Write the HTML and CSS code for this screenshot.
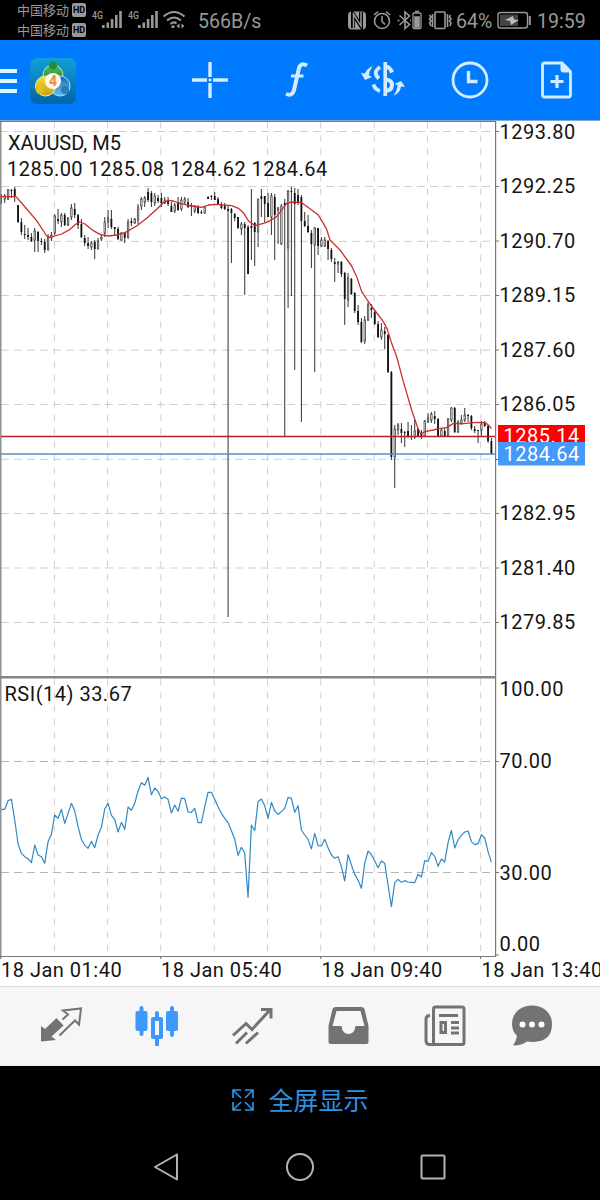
FILE: index.html
```html
<!DOCTYPE html>
<html lang="zh-CN">
<head>
<meta charset="utf-8">
<title>XAUUSD, M5</title>
<link rel="stylesheet" href="styles.css">
</head>
<body>
<div class="phone">
  <div class="status">
    <div class="carriers">
      <div class="carrier">中国移动<span class="hd">HD</span></div>
      <div class="carrier">中国移动<span class="hd">HD</span></div>
    </div>
    <svg class="radio" viewBox="90 0 98 40" fill="#999">
      <text x="92" y="19" class="gen" textLength="11" lengthAdjust="spacingAndGlyphs">4G</text>
      <path d="M102 25h2.600v3h-2.600zM106.500 22.500h2.600v5.500h-2.600zM110.800 19h2.600v9h-2.600zM115 15h2.600v13h-2.600zM119.200 11h2.600v17h-2.600z"/>
      <text x="128" y="19" class="gen" textLength="11" lengthAdjust="spacingAndGlyphs">4G</text>
      <path d="M138 25h2.600v3h-2.600zM142.500 22.500h2.600v5.500h-2.600zM146.800 19h2.600v9h-2.600zM151 15h2.600v13h-2.600zM155.200 11h2.600v17h-2.600z"/>
      <g fill="none" stroke="#999" stroke-width="2"><path d="M163.500 16.500q10.500-9 21 0M167 20.500q7-6 14 0M170.500 24q3.500-3 6 -.5"/></g>
      <path d="M171.500 25.500h3v2.500h-3zM176.500 26l3-2.500v5zM184.500 26l-3-2.500v5z"/>
    </svg>
    <span class="speed">566B/s</span>
    <svg class="sys" viewBox="346 0 108 40" fill="none" stroke="#999" stroke-width="1.600">
      <rect x="348" y="11.500" width="18" height="18" rx="4" fill="#999" stroke="none"/>
      <path d="M353 28V14l8 12V12" stroke="#000" stroke-width="4"/><path d="M353.500 28V14l7.500 12V12" stroke-width="1.500"/>
      <circle cx="382" cy="21" r="7.500"/><path d="M382 16v5.500l3 3M374 15l4-3.500M390 15l-4-3.500"/>
      <path d="M399.500 15.500l10 9-4.500 4V12l4.500 4-10 9M397.500 20.500h2M410 20.500h1"/>
      <rect x="413" y="13" width="8" height="15.500" rx="1" stroke-width="1.300"/><path d="M415 11.500h4"/><path d="M415 17h4v10h-4z" fill="#999"/>
      <rect x="435" y="12" width="10" height="16.500" rx="1"/><path d="M432.500 14v13M429.500 15l1.500 2-1.500 2 1.500 2-1.500 2 1.500 3M447.500 14v13M450.500 15l-1 2 1.500 2-1.500 2 1.500 2-1 3"/>
    </svg>
    <span class="pct">64%</span>
    <svg class="batt" viewBox="497 0 36 40" fill="none" stroke="#999"><rect x="498" y="12.500" width="29.500" height="15.500" rx="2.500" stroke-width="1.400"/><path d="M500 14.500h18v11.500h-18z" fill="#444" stroke="none"/><path d="M529.800 16v9" stroke-width="2"/><path d="M505 20l8-4 1 3.500 5 .5-8 5-1-4z" fill="#bbb" stroke="none"/></svg>
    <span class="time">19:59</span>
  </div>

  <header class="topbar">
    <svg class="menu" viewBox="0 0 18 28"><path d="M0 5h17M0 15h17M0 25h17" stroke="#e0f4ff" stroke-width="4"/></svg>
    <svg class="logo" viewBox="0 0 48 48">
      <defs>
        <linearGradient id="tile" x2="0" y2="1"><stop stop-color="#10a0d8"/><stop offset="1" stop-color="#0563ab"/></linearGradient>
        <linearGradient id="green" x2="0" y2="1"><stop stop-color="#55bd62"/><stop offset="1" stop-color="#16772c"/></linearGradient>
        <linearGradient id="gold" x2="0" y2="1"><stop stop-color="#f3df3b"/><stop offset="1" stop-color="#c99d0e"/></linearGradient>
        <linearGradient id="blue" x2="0" y2="1"><stop stop-color="#1c6cb0"/><stop offset="1" stop-color="#67bdf2"/></linearGradient>
      </defs>
      <rect x="1" y="1" width="46" height="46" rx="7" fill="url(#tile)"/>
      <circle cx="24" cy="18" r="10" fill="url(#green)" stroke="#b8e8ae"/>
      <circle cx="31" cy="29" r="10" fill="url(#blue)" stroke="#a9dcfb"/>
      <circle cx="16.500" cy="29" r="10" fill="url(#gold)" stroke="#f5ee96"/>
      <circle cx="24" cy="8.500" r="4" fill="#258b39"/><circle cx="11" cy="33" r="4" fill="#e1c01d"/><circle cx="36" cy="33" r="4" fill="#2b7dbf"/>
      <circle cx="24" cy="24" r="8" fill="#fffaf0"/>
      <text x="24" y="29" text-anchor="middle" class="four">4</text>
    </svg>
    <svg class="tools" viewBox="180 40 420 80" fill="none" stroke="#d4ecff" stroke-width="2.800">
      <path d="M210 62v15M210 83v15M192 80h15M213 80h15" stroke-width="3.400"/><path d="M208.700 78.700h2.600v2.600h-2.600z" fill="#d4ecff" stroke="none"/>
      <path d="M307 65.500Q301 62 299 68l-5 22q-1.500 6.500-8 4" stroke-width="4"/><path d="M291 76h12.500" stroke-width="3"/>
      <path d="M380 67q-8 5.500-1 11.500M373.500 84.500q1.500 5 6.500 6.500" stroke-width="3.800"/>
      <path d="M385.200 62v34" stroke-width="3.600"/><path d="M386 66.500q4 .5 6 6M386 79.500q6.500 1 6 6t-6.500 5.500" stroke-width="4"/>
      <path d="M361 73l4 7 7-3-3-1.500q0-5 4-9.500-6 2-8 7.500zM405 87l-4-6-6.500 3 3 1q0 5-4 10.500 6.500-2 7.500-9z" fill="#d4ecff" stroke="none"/>
      <circle cx="470" cy="80" r="17"/><path d="M468.500 71v10.500h9" stroke-width="3.400"/>
      <path d="M545 63H562l8.500 8.500V95q0 2-2 2h-24q-2 0-2-2V65q0-2 2.500-2z"/><path d="M560.500 62.500v7q0 3 3 3h7.500v-1l-8.500-8.500z" fill="#d4ecff" stroke="none"/><path d="M557 75v13M550.500 81.500h13" stroke-width="3.200"/>
    </svg>
  </header>

  <main class="chart">
    <svg viewBox="0 120 600 866" class="plot">
      <path class="edge" d="M0 120.500h600"/>
      <g id="grid" class="grid"></g>
      <g id="candles"></g>
      <path id="average" class="average"/>
      <path class="level ask" d="M1 436.500h495"/>
      <path class="level bid" d="M1 454h495"/>
      <path id="rsi" class="rsi"/>
      <path class="frame" d="M.8 121.500v835M0 121.500h496M495.600 121v836M0 956.500h496"/>
      <path class="divider" d="M0 677.300h496"/>
      <path class="frame" d="M496 131.500h3M496 186.500h3M496 241h3M496 295.500h3M496 350h3M496 404.500h3M496 459.500h3M496 513.500h3M496 568h3M496 622.500h3M496 761.500h3M496 872.500h3M496 955h3M.8 956v3M160.800 956v3M320.800 956v3M480.500 956v3"/>
      <g class="label">
        <text x="8" y="150" class="symbol">XAUUSD, M5</text>
        <text x="7" y="175.500" class="ohlc">1285.00 1285.08 1284.62 1284.64</text>
        <text x="4.500" y="701">RSI(14) 33.67</text>
        <text x="499.500" y="138.500">1293.80</text><text x="499.500" y="193.200">1292.25</text><text x="499.500" y="247.700">1290.70</text>
        <text x="499.500" y="302">1289.15</text><text x="499.500" y="356.500">1287.60</text><text x="499.500" y="411">1286.05</text>
        <text x="499.500" y="520">1282.95</text><text x="499.500" y="574.500">1281.40</text><text x="499.500" y="629">1279.85</text>
        <text x="499.500" y="696.300">100.00</text><text x="499.500" y="768">70.00</text><text x="499.500" y="879.500">30.00</text><text x="499.500" y="950.500">0.00</text>
        <text x="1" y="976.500">18 Jan 01:40</text><text x="161" y="976.500">18 Jan 05:40</text><text x="321.500" y="976.500">18 Jan 09:40</text><text x="481.500" y="976.500">18 Jan 13:40</text>
      </g>
      <path d="M498 425h87v20h-87z" fill="#f00"/><text x="503.500" y="443" class="label price">1285.14</text>
      <path d="M498 442h87v23.500h-87z" fill="#4499fb"/><text x="503.500" y="461" class="label price">1284.64</text>
    </svg>
  </main>

  <nav class="tabs">
    <svg viewBox="0 0 44 44"><path d="M2 39.500V24l4 3 11.500-11 7 7.500-12 11 4.500 3.500z" fill="#737373"/><path d="M20.500 33.500L36 18.500l4 4L42 6.500 24 8.500l5 4-5.500 5" fill="none" stroke="#737373" stroke-width="2"/></svg>
    <svg viewBox="0 0 44 44" fill="#3f98fc"><path d="M.5 11q0-2 2-2h2V6q0-2 2-2t2 2v3h2q2 0 2 2v16q0 2-2 2h-2v3q0 2-2 2t-2-2v-3h-2q-2 0-2-2zM31 11q0-2 2-2h2V6q0-2 2-2t2 2v3h2q2 0 2 2v16q0 2-2 2h-2v4q0 2-2 2t-2-2v-4h-2q-2 0-2-2z"/><path fill-rule="evenodd" d="M16 17q0-2 2-2h2v-4q0-2 2-2t2 2v4h2q2 0 2 2v18q0 2-2 2h-2v6q0 2-2 2t-2-2v-6h-2q-2 0-2-2zm4 2v14h4V19z"/></svg>
    <svg viewBox="0 0 44 44" fill="none" stroke="#737373" stroke-width="3"><path d="M2 33.500l13-12 6 6L38 9M30 7.500h10v9M5 41.500l11-11M15 41.500l12-11"/></svg>
    <svg viewBox="0 0 44 44"><path fill-rule="evenodd" fill="#737373" d="M8.500 5h26q2 0 3 2l4 17v16q0 2-2 2h-36q-2 0-2-2V24l4-17q1-2 3-2zm1 4l-4 15h9q1 8 7 8t7-8h9l-4-15z"/></svg>
    <svg viewBox="0 0 44 44" fill="none" stroke="#737373" stroke-width="3"><rect x="10.500" y="5" width="30.500" height="37.500" rx="2"/><path d="M7 13.500q-4 0-4 4v21q0 4 4 4h6M16 13.500h19M28 20.500h8M28 26h8M28 31h8"/><rect x="18" y="20.500" width="4.500" height="10"/></svg>
    <svg class="chat" viewBox="0 0 44 44"><path fill="#737373" d="M22 3.500C10 3.500 2 11.500 2 22q0 7 5 12-1 6-4 9.500 9 0 14-4 25 3 25-17.500C42 11.500 34 3.500 22 3.500z"/><g fill="#fff"><circle cx="12.500" cy="22.500" r="3"/><circle cx="22" cy="22.500" r="3"/><circle cx="31.500" cy="22.500" r="3"/></g></svg>
  </nav>

  <div class="fullscreen">
    <svg viewBox="0 0 24 24" fill="none" stroke="#2c92e0" stroke-width="1.700"><path d="M2 10V2h8M14 2h8v8M22 14v8h-8M10 22H2v-8M2 2l8 8M22 2l-8 8M22 22l-8-8M2 22l8-8"/></svg>
    <span>全屏显示</span>
  </div>
  <div class="system">
    <svg viewBox="0 0 30 30"><path d="M3 15L25 2.500v25z"/></svg>
    <svg viewBox="0 0 30 30"><circle cx="15" cy="15" r="13"/></svg>
    <svg viewBox="0 0 30 30"><rect x="3.500" y="3.500" width="23" height="23" rx="1"/></svg>
  </div>
</div>
<script src="chart.js"></script>
</body>
</html>
```
FILE: styles.css
```css
body { margin: 0; background: #000; font-family: Roboto, "Noto Sans CJK SC", sans-serif; }
.phone { width: 600px; height: 1200px; display: flex; flex-direction: column; overflow: hidden; }
svg { display: block; flex: none; }

.status { height: 40px; display: flex; align-items: center; color: #999; font-size: 20px; white-space: nowrap; }
.carriers { width: 73px; padding-left: 17px; display: flex; flex-direction: column; gap: 4px; }
.carrier { display: flex; align-items: center; gap: 3px; height: 16px; font-size: 13px; line-height: 16px; font-family: "Noto Sans CJK SC", sans-serif; }
.hd { width: 14px; height: 14px; border-radius: 2px; background: #999; color: #000; font: bold 9px/14px Roboto, sans-serif; text-align: center; }
.radio { width: 98px; height: 40px; }
.gen { font: 500 11px Roboto, sans-serif; }
.speed { width: 148px; margin-left: 10px; padding-top: 2px; font-size: 19.600px; }
.sys { width: 108px; height: 40px; }
.pct { width: 41px; margin-left: 2px; padding-top: 2px; font-size: 19.500px; }
.batt { width: 36px; height: 40px; }
.time { margin-left: 4px; padding-top: 2px; font-size: 19.600px; }

.topbar { height: 80px; display: flex; align-items: center; background: #007aff; }
.menu { width: 18px; height: 28px; }
.logo { width: 48px; height: 48px; margin-left: 11px; margin-top: 1px; }
.four { font: bold 14px Roboto, sans-serif; fill: #f08a35; }
.tools { width: 420px; height: 80px; margin-left: auto; }

.chart { height: 866px; background: #fff; }
.plot { width: 600px; height: 866px; }
.grid { fill: none; stroke: #cfcfcf; stroke-width: 1; }
.edge { stroke: #7fa9d4; }
.frame { fill: none; stroke: #777; stroke-width: 1.200; }
.divider { stroke: #858585; stroke-width: 2.600; }
.level { stroke-width: 1.300; }
.ask { stroke: #b5222b; }
.bid { stroke: #4b93cc; }
.average { fill: none; stroke: #c8302c; stroke-width: 1.300; stroke-linejoin: round; }
.rsi { fill: none; stroke: #3089c5; stroke-width: 1.200; stroke-linejoin: round; }
.wick { stroke: #333; stroke-width: 1; }
.body-down { fill: #111; }
.body-up { fill: #fff; stroke: #444; stroke-width: .8; }
.label { font: 20px Roboto, sans-serif; letter-spacing: .5px; fill: #141414; }
.symbol { letter-spacing: 0; }
.ohlc { letter-spacing: .48px; }
.price { fill: #fff; }

.tabs { height: 79px; border-top: 1px solid #dedede; background: #f6f6f6; display: flex; align-items: flex-start; gap: 52px; padding: 15px 0 0 39px; box-sizing: border-box; height: 80px; }
.tabs svg { width: 44px; height: 44px; }
.tabs .chat { margin-left: -9px; }

.fullscreen { height: 70px; display: flex; align-items: center; justify-content: center; gap: 13px; color: #2c92e0; font: 25px/66px "Noto Sans CJK SC", sans-serif; }
.fullscreen svg { width: 24px; height: 24px; margin-bottom: 2px; }
.fullscreen span { padding-bottom: 4px; }
.system { height: 64px; display: flex; justify-content: center; gap: 103px; padding-top: 16px; box-sizing: border-box; }
.system svg { width: 30px; height: 30px; fill: none; stroke: #b4b4b4; stroke-width: 2; stroke-linejoin: round; }
```
FILE: chart.js
```js
const X0 = 1.4, STEP = 10 / 3;
const xAt = i => X0 + i * STEP;
const NS = 'http://www.w3.org/2000/svg';
function add(parent, tag, attrs) {
  const el = document.createElementNS(NS, tag);
  for (const k in attrs) el.setAttribute(k, attrs[k]);
  parent.appendChild(el);
}

// Grid lines
const grid = document.getElementById('grid');
for (const x of [54.4, 107.6, 160.8, 214.2, 267.5, 320.8, 374.2, 427.5, 480.7]) {
  add(grid, 'path', { d: `M${x} 122V677M${x} 679V956`, 'stroke-dasharray': '6.500 6.800' });
}
for (const y of [131.5, 186.5, 241.3, 295.5, 350.2, 404.5, 459.3, 513.5, 568, 622.5, 761.5, 872.5]) {
  add(grid, 'path', { d: `M1 ${y}H495`, 'stroke-dasharray': '8 5', stroke: y > 700 ? '#b5b5b5' : '#cfcfcf' });
}

// Each candle: high, body top, body bottom, low; a trailing "w" marks a rising one
const candles = `
194 196 197 204;194 196 199 203w;189 190 199 200w;189 190 191 198;187 189 196 202;205 205 222 223;218 222 232 235;225 234 235 239;228 235 237 240;233 237 241 242;
228 231 240 252w;231 232 241 252;238 241 242 245;239 242 250 253;234 237 249 251w;232 235 238 241w;214 216 233 235w;209 219 221 224;213 215 222 227w;213 215 225 226;
217 218 225 226w;204 208 217 220w;203 209 215 218;214 215 225 229;219 224 237 238;235 238 243 246;237 243 246 249;241 243 247 250w;240 242 249 259;238 241 249 249w;
235 237 239 241w;217 222 233 237w;210 218 222 228w;210 219 227 229;227 227 229 235;227 229 239 240;232 233 240 241w;232 233 238 243;219 222 237 239w;218 221 223 226;
218 219 223 224w;204 207 220 224w;197 199 206 210w;196 198 202 207w;188 192 200 202;191 193 202 207;193 196 203 206w;195 198 201 203;193 198 203 207;197 200 203 204w;
197 201 204 206;202 206 212 212;203 205 211 213w;197 202 210 211;197 200 209 211w;197 199 202 204w;198 202 207 208;203 205 207 216;205 206 211 213w;205 207 213 214;
210 212 213 214;206 207 213 214w;196 197 199 199;195 196 197 200;192 196 200 200;197 199 204 205;202 204 208 209;203 205 209 210;206 209 211 617;208 209 213 263;
213 214 218 221;217 217 228 229;222 224 229 235w;222 224 228 295;225 227 274 274;189 226 228 260;222 223 232 266;199 199 232 247w;189 196 199 217;196 196 204 222;
193 203 217 217;193 196 217 235w;194 197 215 260;207 208 210 244w;204 206 244 245w;199 203 205 437;190 191 248 308w;187 191 192 296;188 193 204 370;189 195 203 205;
195 197 221 422;212 221 226 227;215 226 232 233;230 233 244 268;227 228 245 372w;228 228 246 255;237 240 246 247w;237 240 246 247w;240 241 249 260;248 250 259 262;
258 262 264 282;261 262 264 273w;261 262 274 277;272 273 299 325;273 278 300 307w;278 279 294 295;292 293 311 313;305 311 322 325;318 322 342 343;316 320 341 344w;
302 305 320 321w;304 308 310 318;310 312 324 325;321 324 337 338;323 330 337 340w;327 331 334 349;334 335 372 373;371 372 457 460;425 429 457 488w;423 425 430 435w;
423 429 433 443;431 432 433 447;422 431 437 438;425 436 437 440;420 431 437 439w;428 429 437 437;430 433 437 439;420 421 436 437w;413 418 422 423w;412 414 420 423w;
411 416 419 424;418 419 436 437;428 430 436 437w;428 431 436 437;418 419 436 437w;407 408 420 422w;407 408 432 433;420 422 432 433w;415 420 423 425w;408 415 420 422w;
414 415 416 422;415 416 428 430;426 429 431 433;430 430 431 443;421 424 430 436w;421 423 426 427;425 426 441 443;438 441 454 455`;
const layer = document.getElementById('candles');
candles.replace(/\n/g, '').split(';').forEach((row, i) => {
  const [high, top, bottom, low] = row.replace('w', '').split(' ').map(Number);
  const x = xAt(i);
  add(layer, 'path', { class: 'wick', d: `M${x} ${high}V${low}` });
  const up = row.endsWith('w');
  add(layer, 'rect', { class: up ? 'body-up' : 'body-down', x: x - (up ? 0.7 : 0.9), y: top, width: up ? 1.4 : 1.8, height: bottom - top });
});

// Moving average
const average = [
  { x: 0, y: 120, pts: '0,230 48,230 70,255 110,302 140,348 150,352 185,342 210,328 228,312 240,306 255,312 280,332 300,343 325,348 350,345 375,338 410,318 440,295 470,268 490,248 505,241 520,243' },
  { x: 180, y: 120, pts: '0,250 35,258 65,262 85,255 110,253 155,257 175,265 190,278 205,302 225,317 250,310 265,305 290,290 320,250 335,246 365,248 395,270 415,285 430,310 440,328' },
  { x: 330, y: 240, pts: '0,0 30,30 65,78 80,110 95,155 120,192 160,245 172,268 185,310 200,350 220,425 245,510 262,560 272,582 285,575 310,570 325,566 350,563 370,550 400,551 440,547 465,548 475,555 484,566' }
];
document.getElementById('average').setAttribute('d', 'M' + average.map(s =>
  s.pts.split(' ').map(p => { const [x, y] = p.split(',').map(Number); return (s.x + x / 3) + ' ' + (s.y + y / 3); }).join('L')).join('L'));

// RSI series
const early = [418,418,392,388,450,522,550,560,566,578,525,555,560,580,515,493,435,445,418,460,430,400,423,470,508,526,535,514,533,495,472,417,400,436,448,486,457,478,411,421,400,363,338,346,322,374,354,364,386,381,388,429,405,424,384,386,426,427,415,458,458,410,367,367,388,410,430,445,458,482,508,556];
const late = [262,280,412,195,212,125,117,137,175,127,153,163,155,145,112,115,157,137,210,225,238,267,220,257,258,238,263,285,295,290,320,363,284,315,343,360,385,310,273,284,303,323,303,310,375,440,368,358,367,362,366,367,368,343,351,302,304,278,289,319,297,306,248,211,264,240,226,216,213,245,254,251,224,234,275,307];
const rsi = early.map(v => 670 + v / 3).concat(late.map(v => 760 + v / 3));
document.getElementById('rsi').setAttribute('d', 'M' + rsi.map((y, i) => xAt(i) + ' ' + y).join('L'));
```
